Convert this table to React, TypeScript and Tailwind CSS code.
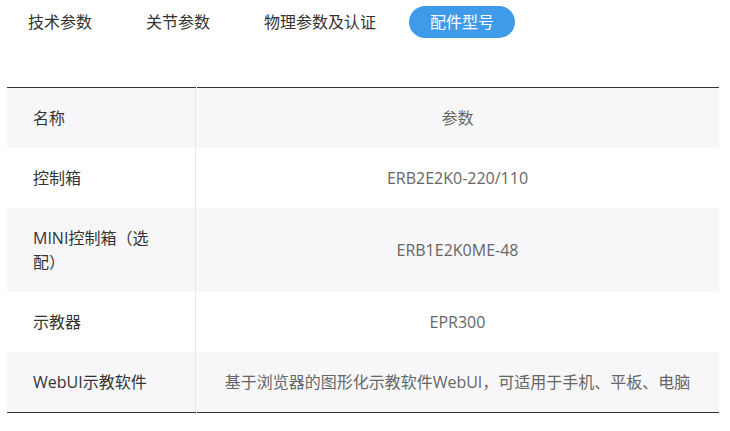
import React from "react";

const tabs = ["技术参数", "关节参数", "物理参数及认证", "配件型号"];
const rows: { name: string; value: string; h: string; bg: string }[] = [
  { name: "控制箱", value: "ERB2E2K0-220/110", h: "h-[60px]", bg: "bg-white" },
  { name: "MINI控制箱（选配）", value: "ERB1E2K0ME-48", h: "h-[84px]", bg: "bg-[#f7f7f9]" },
  { name: "示教器", value: "EPR300", h: "h-[60px]", bg: "bg-white" },
  {
    name: "WebUI示教软件",
    value: "基于浏览器的图形化示教软件WebUI，可适用于手机、平板、电脑",
    h: "h-[60px]",
    bg: "bg-[#f7f7f9]",
  },
];

function Rule() {
  return (
    <div className="flex h-px">
      <div className="w-[189px] bg-[#333]" />
      <div className="w-px bg-[#e8e8e8]" />
      <div className="flex-1 bg-[#333]" />
    </div>
  );
}

export default function App() {
  return (
    <div
      className="w-[730px] h-[431px] bg-white overflow-hidden"
      style={{ fontFamily: '"Open Sans", "Noto Sans CJK SC", sans-serif' }}
    >
      <div className="flex gap-[12px] pl-[7px] pt-[6px]">
        {tabs.map((t, i) => (
          <div
            key={t}
            className={
              "h-[32px] px-[21px] flex items-center text-[16px] rounded-full " +
              (i === 3 ? "bg-[#3f9bea] text-white" : "text-[#333]")
            }
          >
            {t}
          </div>
        ))}
      </div>
      <div className="mt-[49px] ml-[7px] w-[712px]">
        <Rule />
        <div className="flex h-[60px] bg-[#f7f7f9] text-[16px]">
          <div className="w-[189px] border-r border-[#e8e8e8] flex items-center px-[26px] text-[#333]">
            名称
          </div>
          <div className="flex-1 flex items-center justify-center text-[#666]">参数</div>
        </div>
        {rows.map((r) => (
          <div key={r.name} className={"flex text-[16px] " + r.h + " " + r.bg}>
            <div className="w-[189px] border-r border-[#e8e8e8] flex items-center pl-[26px] pr-[24px] text-[#333] leading-[24px]">
              {r.name}
            </div>
            <div className="flex-1 flex items-center justify-center text-[#666]">{r.value}</div>
          </div>
        ))}
        <Rule />
      </div>
    </div>
  );
}
